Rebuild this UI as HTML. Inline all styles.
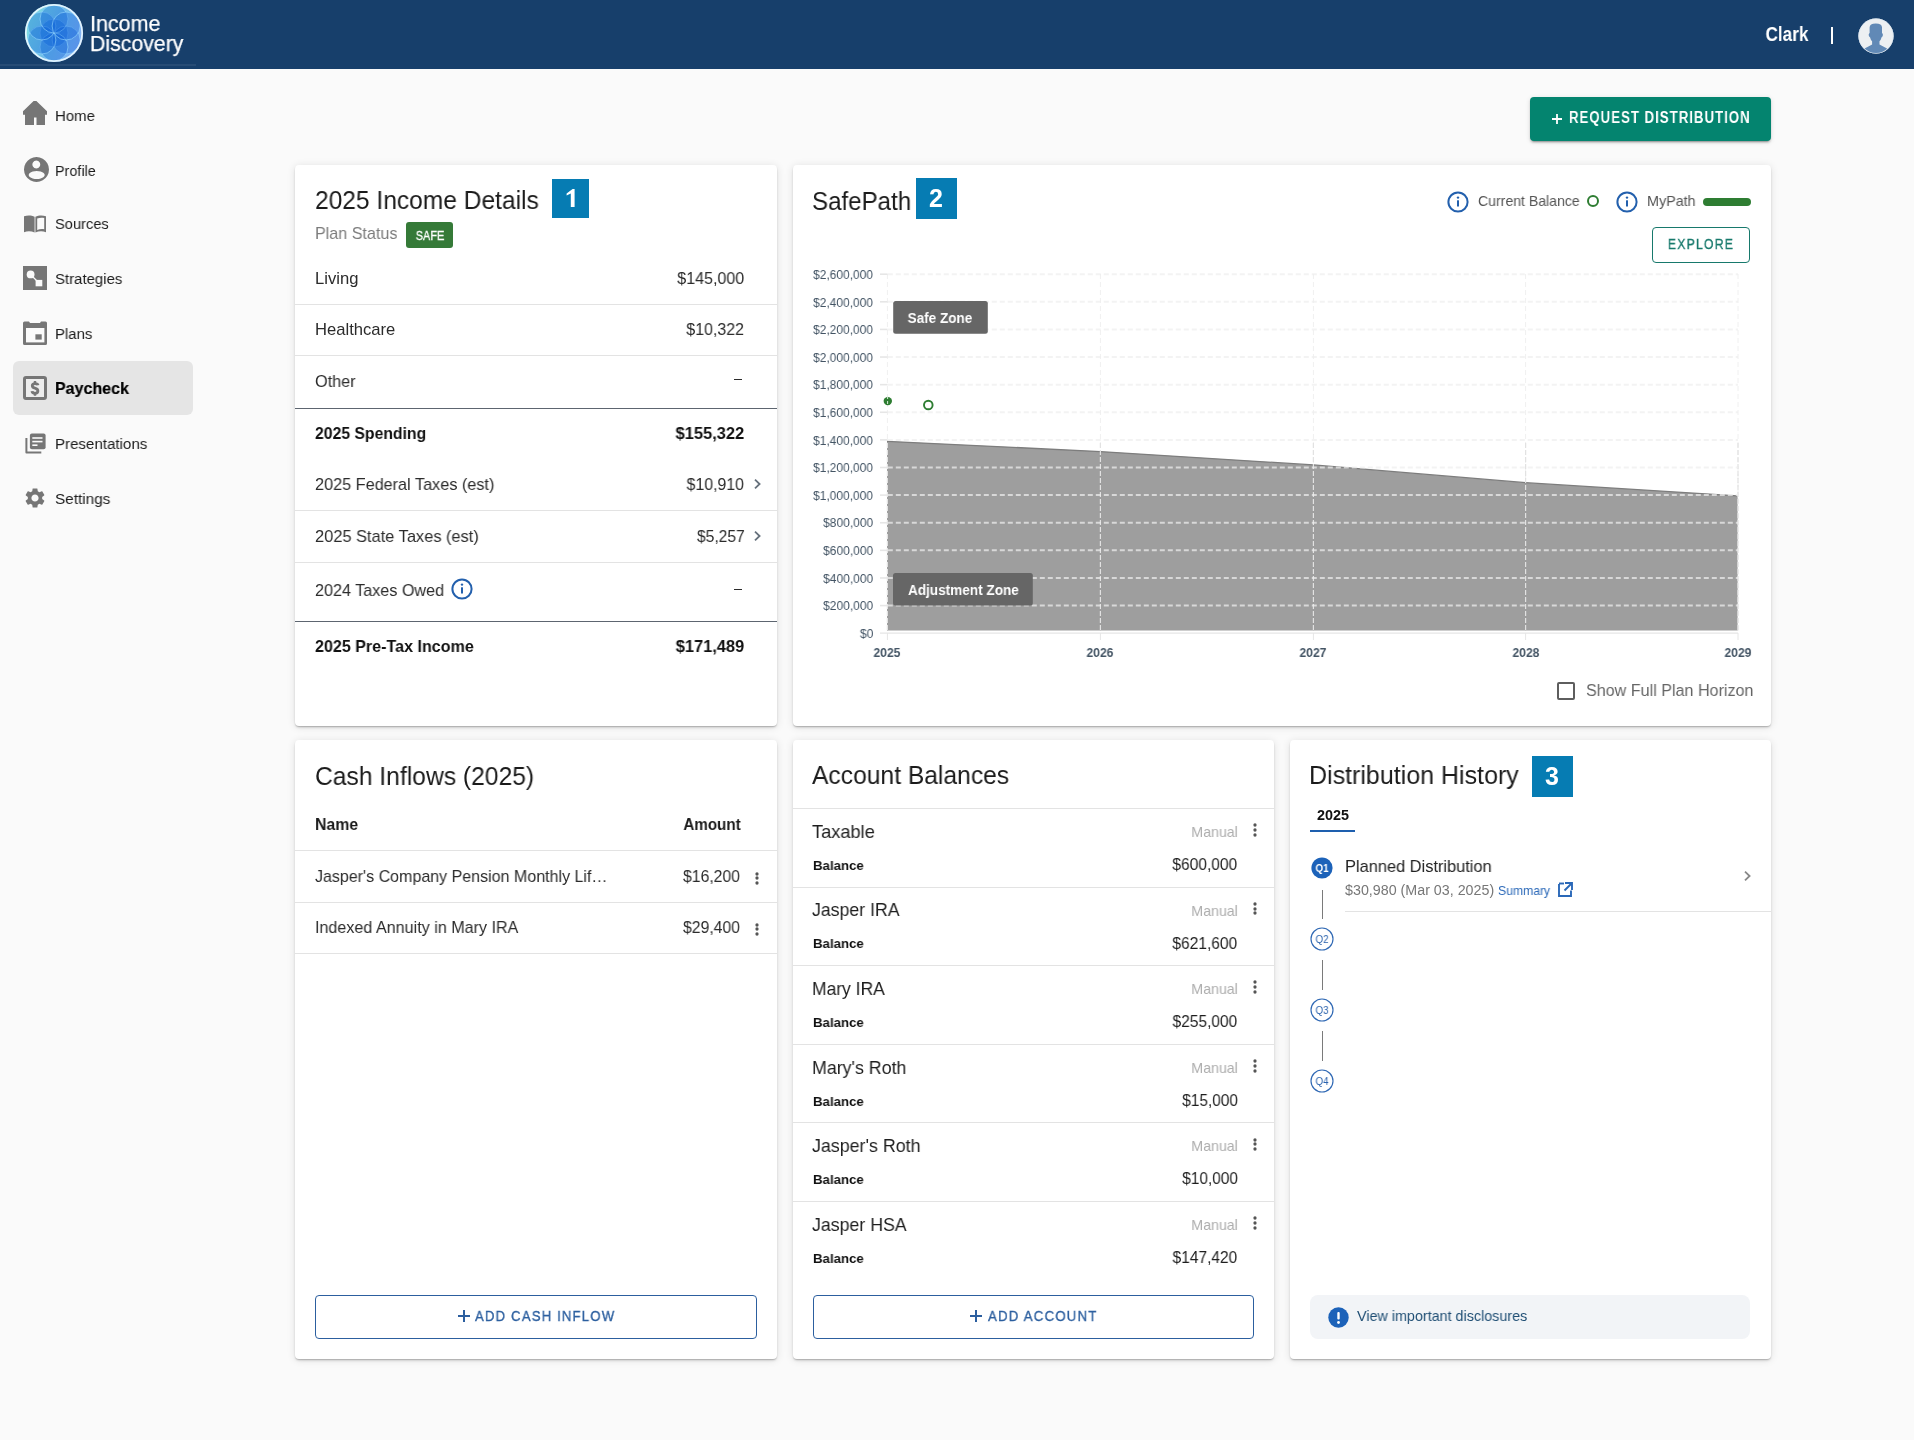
<!DOCTYPE html>
<html><head><meta charset="utf-8"><title>Income Discovery - Paycheck</title>
<style>
html,body{margin:0;padding:0;}
body{width:1914px;height:1440px;overflow:hidden;background:#fafafa;position:relative;font-family:"Liberation Sans",sans-serif;}
div[id]{will-change:transform;}
</style></head><body>
<div style="position:absolute;left:0.00px;top:0.00px;width:1914.00px;height:69.00px;background:#173f6b;"></div>
<div style="position:absolute;left:0.00px;top:64.00px;width:196.00px;height:2.00px;background:rgba(255,255,255,0.07);"></div>
<svg style="position:absolute;left:24.10px;top:3.00px;" width="60" height="60" viewBox="0 0 60 60">
<defs>
<linearGradient id="lg" x1="0" y1="0.3" x2="1" y2="0.7">
<stop offset="0%" stop-color="#7fe0e0"/>
<stop offset="50%" stop-color="#6fbde8"/>
<stop offset="100%" stop-color="#86aef4"/>
</linearGradient>
<clipPath id="lc"><circle cx="30" cy="30" r="28.5"/></clipPath>
</defs>
<circle cx="30" cy="30" r="29" fill="url(#lg)"/>
<g clip-path="url(#lc)" fill="rgba(5,90,215,0.33)" stroke="rgba(150,215,255,0.8)" stroke-width="0.8">
<circle cx="30" cy="30" r="14"/><circle cx="42.12" cy="37.00" r="14"/><circle cx="30.00" cy="44.00" r="14"/><circle cx="17.88" cy="37.00" r="14"/><circle cx="17.88" cy="23.00" r="14"/><circle cx="30.00" cy="16.00" r="14"/><circle cx="42.12" cy="23.00" r="14"/>
</g>
<circle cx="30" cy="30" r="28.2" fill="none" stroke="rgba(235,248,255,0.9)" stroke-width="1.8"/>
</svg>
<div id="t5d77f09a1" style="position:absolute;top:13.01px;font-size:22.20px;line-height:22.20px;font-weight:400;color:#ffffff;white-space:nowrap;font-family:'Liberation Sans', sans-serif;left:90.00px;transform-origin:0 50%;transform:scaleX(0.9673);-webkit-text-stroke:0.25px #ffffff;">Income</div>
<div id="t301c5ce01" style="position:absolute;top:32.80px;font-size:22.20px;line-height:22.20px;font-weight:400;color:#ffffff;white-space:nowrap;font-family:'Liberation Sans', sans-serif;left:90.00px;transform-origin:0 50%;transform:scaleX(0.9587);-webkit-text-stroke:0.25px #ffffff;">Discovery</div>
<div id="t5fa49b6c1" style="position:absolute;top:24.10px;font-size:20.60px;line-height:20.60px;font-weight:700;color:#ffffff;white-space:nowrap;font-family:'Liberation Sans', sans-serif;right:105.30px;transform-origin:100% 50%;transform:scaleX(0.8347);">Clark</div>
<div style="position:absolute;left:1831.00px;top:27.00px;width:2.00px;height:16.50px;background:#ffffff;"></div>
<svg style="position:absolute;left:1857.50px;top:18.30px;" width="36" height="36" viewBox="0 0 36 36">
<circle cx="18" cy="18" r="17.6" fill="#edf0f2"/>
<circle cx="18" cy="18" r="17.2" fill="none" stroke="#dbe6f0" stroke-width="0.8"/>
<clipPath id="avc"><circle cx="18" cy="18" r="17"/></clipPath>
<g clip-path="url(#avc)" fill="#6189b6">
<path d="M11.6 9.5 Q11.6 5.6 17.8 5.6 Q24 5.6 24 9.5 L24 15 Q25.2 15.6 24.8 17.6 Q24.4 19.2 23.6 19.2 Q22.9 22 21.5 23.2 L21.5 26.4 Q24.5 28.2 28.6 30.2 L34 37 L2 37 L7 30.2 Q11.2 28.2 14.1 26.4 L14.1 23.2 Q12.7 22 12 19.2 Q11.2 19.2 10.8 17.6 Q10.4 15.6 11.6 15 Z"/>
</g>
</svg>
<div style="position:absolute;left:13.00px;top:361.00px;width:180.00px;height:54.00px;background:#e5e5e5;border-radius:6px;"></div>
<svg style="position:absolute;left:23.00px;top:101.00px;" width="24" height="24" viewBox="0 0 24 24"><path fill="#767676" d="M10.6 0 L13.4 0 L24 10.2 L24 13.8 L22 13.8 L22 24 L13.5 24 L13.5 16.6 L11 16.6 L11 24 L2 24 L2 13.8 L0 13.8 L0 10.2 Z"/></svg>
<div id="tc4697dac1" style="position:absolute;top:107.81px;font-size:15.50px;line-height:15.50px;font-weight:400;color:#1c1c1c;white-space:nowrap;font-family:'Liberation Sans', sans-serif;left:55.10px;transform-origin:0 50%;transform:scaleX(0.9651);">Home</div>
<svg style="position:absolute;left:23.50px;top:157.30px;" width="25" height="25" viewBox="0 0 25 25"><path fill="#767676" fill-rule="evenodd" d="M12.5 0 A12.5 12.5 0 1 1 12.49 0 Z M12.3 3.6 A3.9 3.9 0 1 0 12.31 3.6 Z M12.7 13.9 A8 4.1 0 1 0 12.71 13.9 Z"/></svg>
<div id="tb227947b1" style="position:absolute;top:162.91px;font-size:15.50px;line-height:15.50px;font-weight:400;color:#1c1c1c;white-space:nowrap;font-family:'Liberation Sans', sans-serif;left:55.10px;transform-origin:0 50%;transform:scaleX(0.9290);">Profile</div>
<svg style="position:absolute;left:24.00px;top:215.00px;" width="22" height="18" viewBox="0 0 22 18"><path fill="#767676" d="M0 1.3 C3.5 0 7.5 0.2 10.6 1.8 L10.6 17.5 C7.2 16 3.6 15.9 0 17.2 Z M11.4 1.8 C14.5 0.2 18.5 0 22 1.3 L22 17.2 C18.4 15.9 14.8 16 11.4 17.5 Z M13.2 3.4 L13.2 15 C15.4 14.1 17.8 13.9 20.2 14.3 L20.2 2.9 C17.8 2.4 15.4 2.6 13.2 3.4 Z" fill-rule="evenodd"/></svg>
<div id="t654b8db11" style="position:absolute;top:215.81px;font-size:15.50px;line-height:15.50px;font-weight:400;color:#1c1c1c;white-space:nowrap;font-family:'Liberation Sans', sans-serif;left:55.10px;transform-origin:0 50%;transform:scaleX(0.9462);">Sources</div>
<svg style="position:absolute;left:23.00px;top:266.00px;" width="24" height="24" viewBox="0 0 24 24"><rect width="24" height="24" fill="#767676"/><circle cx="7.6" cy="8.4" r="3.9" fill="#fafafa"/><path d="M9 10 L14 15" stroke="#fafafa" stroke-width="1.2"/><rect x="12.6" y="13.9" width="6.7" height="6.4" fill="#fafafa"/></svg>
<div id="tc17f81271" style="position:absolute;top:270.70px;font-size:15.50px;line-height:15.50px;font-weight:400;color:#1c1c1c;white-space:nowrap;font-family:'Liberation Sans', sans-serif;left:55.10px;transform-origin:0 50%;transform:scaleX(0.9645);">Strategies</div>
<svg style="position:absolute;left:23.00px;top:321.00px;" width="24" height="24" viewBox="0 0 24 24"><path fill="#767676" d="M1.5 0.5 L6 0.5 L7 2 L17 2 L18 0.5 L22.5 0.5 Q24 0.5 24 2 L24 22.5 Q24 24 22.5 24 L1.5 24 Q0 24 0 22.5 L0 2 Q0 0.5 1.5 0.5 Z"/><rect x="3" y="7" width="18.4" height="14.4" fill="#fafafa"/><rect x="12.4" y="13.3" width="6.3" height="5.3" fill="#767676"/></svg>
<div id="t491749941" style="position:absolute;top:326.00px;font-size:15.50px;line-height:15.50px;font-weight:400;color:#1c1c1c;white-space:nowrap;font-family:'Liberation Sans', sans-serif;left:55.10px;transform-origin:0 50%;transform:scaleX(0.9623);">Plans</div>
<svg style="position:absolute;left:23.00px;top:376.00px;" width="24" height="24" viewBox="0 0 24 24"><rect x="1.5" y="1.5" width="21" height="21" rx="1.5" fill="#ededed" stroke="#767676" stroke-width="3"/><path d="M15 9.3 Q14.7 7.6 12 7.6 Q9.3 7.6 9.3 9.7 Q9.3 11.5 12 12.1 Q14.9 12.8 14.9 15.1 Q14.9 17.3 12 17.3 Q9.2 17.3 9 15.2" fill="none" stroke="#767676" stroke-width="2.8"/><path d="M12 5 L12 7.8 M12 17 L12 19.8" stroke="#767676" stroke-width="2.4"/></svg>
<div id="tee25d30b1" style="position:absolute;top:379.91px;font-size:17.00px;line-height:17.00px;font-weight:700;color:#000000;white-space:nowrap;font-family:'Liberation Sans', sans-serif;left:54.94px;transform-origin:0 50%;transform:scaleX(0.9425);-webkit-text-stroke:0.2px #000;">Paycheck</div>
<svg style="position:absolute;left:24.50px;top:432.50px;" width="21" height="21" viewBox="0 0 21 21"><rect x="4.9" y="0.4" width="15.7" height="15.9" rx="2" fill="#767676"/><rect x="7.3" y="4.2" width="10.2" height="1.6" fill="#fafafa"/><rect x="7.3" y="7.8" width="10.2" height="1.6" fill="#fafafa"/><rect x="7.3" y="11.4" width="5.2" height="1.6" fill="#fafafa"/><path d="M0.4 4.9 L2.4 4.9 L2.4 18.5 L16.3 18.5 L16.3 20.4 L1.4 20.4 Q0.4 20.4 0.4 19.4 Z" fill="#767676"/></svg>
<div id="t3b62e9561" style="position:absolute;top:436.00px;font-size:15.50px;line-height:15.50px;font-weight:400;color:#1c1c1c;white-space:nowrap;font-family:'Liberation Sans', sans-serif;left:55.10px;transform-origin:0 50%;transform:scaleX(0.9740);">Presentations</div>
<svg style="position:absolute;left:23.00px;top:486.00px;" width="24" height="24" viewBox="0 0 24 24"><path fill="#767676" d="M19.14 12.94c.04-.3.06-.61.06-.94 0-.32-.02-.64-.07-.94l2.03-1.58c.18-.14.23-.41.12-.61l-1.92-3.32c-.12-.22-.37-.29-.59-.22l-2.39.96c-.5-.38-1.03-.7-1.62-.94l-.36-2.54c-.04-.24-.24-.41-.48-.41h-3.84c-.24 0-.43.17-.47.41l-.36 2.54c-.59.24-1.130.57-1.62.94l-2.39-.96c-.22-.08-.47 0-.59.22L2.74 8.87c-.12.21-.08.47.12.61l2.03 1.58c-.05.3-.09.63-.09.94s.02.64.07.94l-2.030 1.58c-.18.14-.23.41-.12.61l1.92 3.32c.12.22.37.29.59.22l2.39-.96c.5.38 1.03.7 1.62.94l.36 2.54c.05.24.24.41.48.41h3.84c.24 0 .44-.17.47-.41l.36-2.54c.59-.24 1.13-.56 1.62-.94l2.39.96c.22.08.47 0 .59-.22l1.92-3.32c.12-.22.07-.47-.12-.61l-2.01-1.58zM12 15.6c-1.98 0-3.600-1.62-3.6-3.6s1.62-3.6 3.6-3.6 3.6 1.62 3.6 3.6-1.62 3.6-3.6 3.6z"/></svg>
<div id="t4d02d0b91" style="position:absolute;top:490.91px;font-size:15.50px;line-height:15.50px;font-weight:400;color:#1c1c1c;white-space:nowrap;font-family:'Liberation Sans', sans-serif;left:55.10px;transform-origin:0 50%;transform:scaleX(0.9875);">Settings</div>
<div style="position:absolute;left:1530.00px;top:97.00px;width:241.00px;height:43.50px;background:#04846f;border-radius:4px;box-shadow:0 3px 1px -2px rgba(0,0,0,.2),0 2px 2px 0 rgba(0,0,0,.14),0 1px 5px 0 rgba(0,0,0,.12);"></div>
<svg style="position:absolute;left:1552.00px;top:114.20px;" width="10" height="10" viewBox="0 0 10 10"><path d="M5 0 L5 10 M0 5 L10 5" stroke="#ffffff" stroke-width="1.8"/></svg>
<div id="ta82499e11" style="position:absolute;top:110.21px;font-size:15.80px;line-height:15.80px;font-weight:700;color:#ffffff;white-space:nowrap;font-family:'Liberation Sans', sans-serif;letter-spacing:1.20px;left:1568.99px;transform-origin:0 50%;transform:scaleX(0.8367);">REQUEST DISTRIBUTION</div>
<div style="position:absolute;left:295.00px;top:165.00px;width:482.00px;height:560.50px;background:#ffffff;border-radius:4px;box-shadow:0px 2px 3px -1px rgba(0,0,0,0.22),0px 1px 1px 0px rgba(0,0,0,0.12),0px 1px 8px 0px rgba(0,0,0,0.11);"></div>
<div style="position:absolute;left:793.00px;top:165.00px;width:978.00px;height:560.50px;background:#ffffff;border-radius:4px;box-shadow:0px 2px 3px -1px rgba(0,0,0,0.22),0px 1px 1px 0px rgba(0,0,0,0.12),0px 1px 8px 0px rgba(0,0,0,0.11);"></div>
<div style="position:absolute;left:295.00px;top:740.00px;width:482.00px;height:618.50px;background:#ffffff;border-radius:4px;box-shadow:0px 2px 3px -1px rgba(0,0,0,0.22),0px 1px 1px 0px rgba(0,0,0,0.12),0px 1px 8px 0px rgba(0,0,0,0.11);"></div>
<div style="position:absolute;left:793.00px;top:740.00px;width:481.00px;height:618.50px;background:#ffffff;border-radius:4px;box-shadow:0px 2px 3px -1px rgba(0,0,0,0.22),0px 1px 1px 0px rgba(0,0,0,0.12),0px 1px 8px 0px rgba(0,0,0,0.11);"></div>
<div style="position:absolute;left:1290.00px;top:740.00px;width:481.00px;height:618.50px;background:#ffffff;border-radius:4px;box-shadow:0px 2px 3px -1px rgba(0,0,0,0.22),0px 1px 1px 0px rgba(0,0,0,0.12),0px 1px 8px 0px rgba(0,0,0,0.11);"></div>
<div id="t537833f41" style="position:absolute;top:188.31px;font-size:25.50px;line-height:25.50px;font-weight:400;color:#1b1b1b;white-space:nowrap;font-family:'Liberation Sans', sans-serif;left:314.85px;transform-origin:0 50%;transform:scaleX(0.9626);">2025 Income Details</div>
<div style="position:absolute;left:552.00px;top:179.00px;width:37.00px;height:38.80px;background:#067cb3;"></div>
<svg style="position:absolute;left:552.00px;top:179.00px;" width="37" height="39" viewBox="0 0 37 39"><path d="M14.6 14.4 L20.6 10 L22.6 10 L22.6 28 L18.8 28 L18.8 14.6 L14.6 16.6 Z" fill="#ffffff"/></svg>
<div id="t6a7b72811" style="position:absolute;top:225.41px;font-size:17.00px;line-height:17.00px;font-weight:400;color:#7b7b7b;white-space:nowrap;font-family:'Liberation Sans', sans-serif;left:315.24px;transform-origin:0 50%;transform:scaleX(0.9482);">Plan Status</div>
<div style="position:absolute;left:406.00px;top:222.00px;width:47.00px;height:26.00px;background:#357a38;border-radius:3px;"></div>
<div id="tc135e4911" style="position:absolute;top:228.81px;font-size:13.60px;line-height:13.60px;font-weight:400;color:#ffffff;white-space:nowrap;font-family:'Liberation Sans', sans-serif;left:429.50px;transform-origin:0 50%;transform:translateX(-50%) scaleX(0.8025);transform-origin:50% 50%;-webkit-text-stroke:0.35px #ffffff;">SAFE</div>
<div id="t361684ad1" style="position:absolute;top:271.21px;font-size:16.60px;line-height:16.60px;font-weight:400;color:#2b2b2b;white-space:nowrap;font-family:'Liberation Sans', sans-serif;left:315.25px;transform-origin:0 50%;transform:scaleX(1.0012);">Living</div>
<div id="t79e9b75e1" style="position:absolute;top:271.21px;font-size:16.60px;line-height:16.60px;font-weight:400;color:#2b2b2b;white-space:nowrap;font-family:'Liberation Sans', sans-serif;right:1169.70px;transform-origin:100% 50%;transform:scaleX(0.9679);">$145,000</div>
<div style="position:absolute;left:295.00px;top:304.00px;width:482.00px;height:1.00px;background:#e3e3e3;"></div>
<div id="t524ccb641" style="position:absolute;top:322.11px;font-size:16.60px;line-height:16.60px;font-weight:400;color:#2b2b2b;white-space:nowrap;font-family:'Liberation Sans', sans-serif;left:315.25px;transform-origin:0 50%;transform:scaleX(0.9958);">Healthcare</div>
<div id="t698ab7401" style="position:absolute;top:322.11px;font-size:16.60px;line-height:16.60px;font-weight:400;color:#2b2b2b;white-space:nowrap;font-family:'Liberation Sans', sans-serif;right:1169.70px;transform-origin:100% 50%;transform:scaleX(0.9619);">$10,322</div>
<div style="position:absolute;left:295.00px;top:355.00px;width:482.00px;height:1.00px;background:#e3e3e3;"></div>
<div id="t8096a8251" style="position:absolute;top:373.71px;font-size:16.60px;line-height:16.60px;font-weight:400;color:#2b2b2b;white-space:nowrap;font-family:'Liberation Sans', sans-serif;left:315.25px;transform-origin:0 50%;transform:scaleX(0.9782);">Other</div>
<div style="position:absolute;left:733.50px;top:379.00px;width:8.50px;height:1.30px;background:#2b2b2b;"></div>
<div style="position:absolute;left:295.00px;top:408.00px;width:482.00px;height:1.30px;background:#5d6570;"></div>
<div id="ta078a6661" style="position:absolute;top:426.00px;font-size:16.60px;line-height:16.60px;font-weight:700;color:#111111;white-space:nowrap;font-family:'Liberation Sans', sans-serif;left:315.25px;transform-origin:0 50%;transform:scaleX(0.9495);">2025 Spending</div>
<div id="t40611aa91" style="position:absolute;top:426.00px;font-size:16.60px;line-height:16.60px;font-weight:700;color:#111111;white-space:nowrap;font-family:'Liberation Sans', sans-serif;right:1169.70px;transform-origin:100% 50%;transform:scaleX(0.9925);">$155,322</div>
<div id="tbfbdc6e31" style="position:absolute;top:476.61px;font-size:16.60px;line-height:16.60px;font-weight:400;color:#2b2b2b;white-space:nowrap;font-family:'Liberation Sans', sans-serif;left:315.25px;transform-origin:0 50%;transform:scaleX(0.9791);">2025 Federal Taxes (est)</div>
<div id="tcd5840311" style="position:absolute;top:476.61px;font-size:16.60px;line-height:16.60px;font-weight:400;color:#2b2b2b;white-space:nowrap;font-family:'Liberation Sans', sans-serif;right:1169.70px;transform-origin:100% 50%;transform:scaleX(0.9569);">$10,910</div>
<svg style="position:absolute;left:751.20px;top:478.00px;" width="12" height="12" viewBox="0 0 12 12"><path d="M4 1.6 L8.6 6 L4 10.4" fill="none" stroke="#66717c" stroke-width="1.8"/></svg>
<div style="position:absolute;left:295.00px;top:510.00px;width:482.00px;height:1.00px;background:#e3e3e3;"></div>
<div id="tf95ac6701" style="position:absolute;top:528.81px;font-size:16.60px;line-height:16.60px;font-weight:400;color:#2b2b2b;white-space:nowrap;font-family:'Liberation Sans', sans-serif;left:315.25px;transform-origin:0 50%;transform:scaleX(0.9884);">2025 State Taxes (est)</div>
<div id="tb1c58cf41" style="position:absolute;top:528.81px;font-size:16.60px;line-height:16.60px;font-weight:400;color:#2b2b2b;white-space:nowrap;font-family:'Liberation Sans', sans-serif;right:1169.70px;transform-origin:100% 50%;transform:scaleX(0.9416);">$5,257</div>
<svg style="position:absolute;left:751.20px;top:530.00px;" width="12" height="12" viewBox="0 0 12 12"><path d="M4 1.6 L8.6 6 L4 10.4" fill="none" stroke="#66717c" stroke-width="1.8"/></svg>
<div style="position:absolute;left:295.00px;top:562.00px;width:482.00px;height:1.00px;background:#e3e3e3;"></div>
<div id="t9b44e9621" style="position:absolute;top:582.61px;font-size:16.60px;line-height:16.60px;font-weight:400;color:#2b2b2b;white-space:nowrap;font-family:'Liberation Sans', sans-serif;left:315.25px;transform-origin:0 50%;transform:scaleX(0.9742);">2024 Taxes Owed</div>
<svg style="position:absolute;left:450.00px;top:577.00px;" width="24" height="24" viewBox="0 0 24 24"><circle cx="12" cy="12" r="9.60" fill="none" stroke="#2360ad" stroke-width="2"/><rect x="11" y="10.3" width="2" height="6.2" fill="#2360ad"/><circle cx="12" cy="7.6" r="1.2" fill="#2360ad"/></svg>
<div style="position:absolute;left:733.50px;top:589.00px;width:8.50px;height:1.30px;background:#2b2b2b;"></div>
<div style="position:absolute;left:295.00px;top:621.00px;width:482.00px;height:1.30px;background:#5d6570;"></div>
<div id="tb3a977221" style="position:absolute;top:638.50px;font-size:16.60px;line-height:16.60px;font-weight:700;color:#111111;white-space:nowrap;font-family:'Liberation Sans', sans-serif;left:315.25px;transform-origin:0 50%;transform:scaleX(0.9685);">2025 Pre-Tax Income</div>
<div id="tf877e6271" style="position:absolute;top:638.50px;font-size:16.60px;line-height:16.60px;font-weight:700;color:#111111;white-space:nowrap;font-family:'Liberation Sans', sans-serif;right:1169.70px;transform-origin:100% 50%;transform:scaleX(0.9896);">$171,489</div>
<div id="t3a17fe6e1" style="position:absolute;top:188.71px;font-size:25.00px;line-height:25.00px;font-weight:400;color:#1b1b1b;white-space:nowrap;font-family:'Liberation Sans', sans-serif;left:812.48px;transform-origin:0 50%;transform:scaleX(0.9637);">SafePath</div>
<div style="position:absolute;left:916.20px;top:178.20px;width:40.50px;height:40.50px;background:#067cb3;"></div>
<div id="t2df3f6e91" style="position:absolute;top:186.05px;font-size:25.00px;line-height:25.00px;font-weight:700;color:#ffffff;white-space:nowrap;font-family:'Liberation Sans', sans-serif;left:936.45px;transform-origin:0 50%;transform:translateX(-50%) scaleX(1.0000);transform-origin:50% 50%;">2</div>
<svg style="position:absolute;left:1446.00px;top:190.00px;" width="24" height="24" viewBox="0 0 24 24"><circle cx="12" cy="12" r="9.60" fill="none" stroke="#2360ad" stroke-width="2"/><rect x="11" y="10.3" width="2" height="6.2" fill="#2360ad"/><circle cx="12" cy="7.6" r="1.2" fill="#2360ad"/></svg>
<div id="t91fd11831" style="position:absolute;top:193.91px;font-size:14.60px;line-height:14.60px;font-weight:400;color:#555555;white-space:nowrap;font-family:'Liberation Sans', sans-serif;left:1477.84px;transform-origin:0 50%;transform:scaleX(0.9647);">Current Balance</div>
<svg style="position:absolute;left:1586.00px;top:194.00px;" width="14" height="14" viewBox="0 0 14 14"><circle cx="7" cy="7" r="5" fill="none" stroke="#2e7d32" stroke-width="2"/></svg>
<svg style="position:absolute;left:1615.00px;top:190.00px;" width="24" height="24" viewBox="0 0 24 24"><circle cx="12" cy="12" r="9.60" fill="none" stroke="#2360ad" stroke-width="2"/><rect x="11" y="10.3" width="2" height="6.2" fill="#2360ad"/><circle cx="12" cy="7.6" r="1.2" fill="#2360ad"/></svg>
<div id="tcc6b245d1" style="position:absolute;top:193.91px;font-size:14.60px;line-height:14.60px;font-weight:400;color:#555555;white-space:nowrap;font-family:'Liberation Sans', sans-serif;left:1647.14px;transform-origin:0 50%;transform:scaleX(0.9830);">MyPath</div>
<div style="position:absolute;left:1703.00px;top:198.00px;width:48.00px;height:8.00px;background:#2e7d32;border-radius:4px;"></div>
<div style="position:absolute;left:1652.20px;top:227.20px;width:97.60px;height:35.60px;background:transparent;border:1.3px solid #17796c;border-radius:4px;box-sizing:border-box;"></div>
<div id="ta30012cb1" style="position:absolute;top:237.11px;font-size:14.60px;line-height:14.60px;font-weight:400;color:#17796c;white-space:nowrap;font-family:'Liberation Sans', sans-serif;letter-spacing:1.50px;left:1701.00px;transform-origin:0 50%;transform:translateX(-50%) scaleX(0.8345);transform-origin:50% 50%;-webkit-text-stroke:0.35px #17796c;">EXPLORE</div>
<svg style="position:absolute;left:800.00px;top:255.00px;" width="960" height="420" viewBox="0 0 960 420"><line x1="87.40" y1="19.00" x2="87.40" y2="378.00" stroke="#f0f0f0" stroke-width="1" stroke-dasharray="5,3"/><line x1="300.40" y1="19.00" x2="300.40" y2="378.00" stroke="#f0f0f0" stroke-width="1" stroke-dasharray="5,3"/><line x1="513.40" y1="19.00" x2="513.40" y2="378.00" stroke="#f0f0f0" stroke-width="1" stroke-dasharray="5,3"/><line x1="725.60" y1="19.00" x2="725.60" y2="378.00" stroke="#f0f0f0" stroke-width="1" stroke-dasharray="5,3"/><line x1="938.00" y1="19.00" x2="938.00" y2="378.00" stroke="#f0f0f0" stroke-width="1" stroke-dasharray="5,3"/><polygon points="87.00,186.30 300.50,196.60 513.40,209.90 725.60,227.70 937.60,240.80 937.60,375.60 87.00,375.60" fill="#9e9e9e"/><polyline points="87.00,186.30 300.50,196.60 513.40,209.90 725.60,227.70 937.60,240.80" fill="none" stroke="#7d7d7d" stroke-width="1.3"/><line x1="87.40" y1="188.00" x2="87.40" y2="376.00" stroke="#e2e2e2" stroke-width="1.2" stroke-dasharray="5,2"/><line x1="300.40" y1="188.00" x2="300.40" y2="376.00" stroke="#e2e2e2" stroke-width="1.2" stroke-dasharray="5,2"/><line x1="513.40" y1="188.00" x2="513.40" y2="376.00" stroke="#e2e2e2" stroke-width="1.2" stroke-dasharray="5,2"/><line x1="725.60" y1="188.00" x2="725.60" y2="376.00" stroke="#e2e2e2" stroke-width="1.2" stroke-dasharray="5,2"/><line x1="938.00" y1="188.00" x2="938.00" y2="376.00" stroke="#e2e2e2" stroke-width="1.2" stroke-dasharray="5,2"/><line x1="80.00" y1="19.20" x2="87.50" y2="19.20" stroke="#e6e6e6" stroke-width="1.6"/><line x1="87.80" y1="19.20" x2="938.00" y2="19.20" stroke="rgba(238,238,238,0.72)" stroke-width="2" stroke-dasharray="5,3"/><line x1="80.00" y1="46.81" x2="87.50" y2="46.81" stroke="#e6e6e6" stroke-width="1.6"/><line x1="87.80" y1="46.81" x2="938.00" y2="46.81" stroke="rgba(238,238,238,0.72)" stroke-width="2" stroke-dasharray="5,3"/><line x1="80.00" y1="74.43" x2="87.50" y2="74.43" stroke="#e6e6e6" stroke-width="1.6"/><line x1="87.80" y1="74.43" x2="938.00" y2="74.43" stroke="rgba(238,238,238,0.72)" stroke-width="2" stroke-dasharray="5,3"/><line x1="80.00" y1="102.04" x2="87.50" y2="102.04" stroke="#e6e6e6" stroke-width="1.6"/><line x1="87.80" y1="102.04" x2="938.00" y2="102.04" stroke="rgba(238,238,238,0.72)" stroke-width="2" stroke-dasharray="5,3"/><line x1="80.00" y1="129.66" x2="87.50" y2="129.66" stroke="#e6e6e6" stroke-width="1.6"/><line x1="87.80" y1="129.66" x2="938.00" y2="129.66" stroke="rgba(238,238,238,0.72)" stroke-width="2" stroke-dasharray="5,3"/><line x1="80.00" y1="157.27" x2="87.50" y2="157.27" stroke="#e6e6e6" stroke-width="1.6"/><line x1="87.80" y1="157.27" x2="938.00" y2="157.27" stroke="rgba(238,238,238,0.72)" stroke-width="2" stroke-dasharray="5,3"/><line x1="80.00" y1="184.89" x2="87.50" y2="184.89" stroke="#e6e6e6" stroke-width="1.6"/><line x1="87.80" y1="184.89" x2="938.00" y2="184.89" stroke="rgba(238,238,238,0.72)" stroke-width="2" stroke-dasharray="5,3"/><line x1="80.00" y1="212.50" x2="87.50" y2="212.50" stroke="#e6e6e6" stroke-width="1.6"/><line x1="87.80" y1="212.50" x2="938.00" y2="212.50" stroke="rgba(238,238,238,0.72)" stroke-width="2" stroke-dasharray="5,3"/><line x1="80.00" y1="240.12" x2="87.50" y2="240.12" stroke="#e6e6e6" stroke-width="1.6"/><line x1="87.80" y1="240.12" x2="938.00" y2="240.12" stroke="rgba(238,238,238,0.72)" stroke-width="2" stroke-dasharray="5,3"/><line x1="80.00" y1="267.74" x2="87.50" y2="267.74" stroke="#e6e6e6" stroke-width="1.6"/><line x1="87.80" y1="267.74" x2="938.00" y2="267.74" stroke="rgba(238,238,238,0.72)" stroke-width="2" stroke-dasharray="5,3"/><line x1="80.00" y1="295.35" x2="87.50" y2="295.35" stroke="#e6e6e6" stroke-width="1.6"/><line x1="87.80" y1="295.35" x2="938.00" y2="295.35" stroke="rgba(238,238,238,0.72)" stroke-width="2" stroke-dasharray="5,3"/><line x1="80.00" y1="322.96" x2="87.50" y2="322.96" stroke="#e6e6e6" stroke-width="1.6"/><line x1="87.80" y1="322.96" x2="938.00" y2="322.96" stroke="rgba(238,238,238,0.72)" stroke-width="2" stroke-dasharray="5,3"/><line x1="80.00" y1="350.58" x2="87.50" y2="350.58" stroke="#e6e6e6" stroke-width="1.6"/><line x1="87.80" y1="350.58" x2="938.00" y2="350.58" stroke="rgba(238,238,238,0.72)" stroke-width="2" stroke-dasharray="5,3"/><line x1="80.00" y1="378.19" x2="938.00" y2="378.19" stroke="#e6e6e6" stroke-width="1.3"/><line x1="87.40" y1="378.00" x2="87.40" y2="385.00" stroke="#e6e6e6" stroke-width="1"/><line x1="300.40" y1="378.00" x2="300.40" y2="385.00" stroke="#e6e6e6" stroke-width="1"/><line x1="513.40" y1="378.00" x2="513.40" y2="385.00" stroke="#e6e6e6" stroke-width="1"/><line x1="725.60" y1="378.00" x2="725.60" y2="385.00" stroke="#e6e6e6" stroke-width="1"/><line x1="938.00" y1="378.00" x2="938.00" y2="385.00" stroke="#e6e6e6" stroke-width="1"/><rect x="93.20" y="46.00" width="94.6" height="32.7" rx="2.5" fill="#666666"/><rect x="93.00" y="318.10" width="139.8" height="32.5" rx="2.5" fill="#666666"/><circle cx="87.80" cy="146.10" r="4.2" fill="#2e7d32"/><line x1="87.60" y1="141.00" x2="87.60" y2="151.00" stroke="#d9ead9" stroke-width="1" stroke-dasharray="3,2"/><circle cx="128.30" cy="150.00" r="4.3" fill="none" stroke="#2e7d32" stroke-width="1.9"/></svg>
<div id="t079c8bfc1" style="position:absolute;top:311.30px;font-size:14.50px;line-height:14.50px;font-weight:700;color:#ffffff;white-space:nowrap;font-family:'Liberation Sans', sans-serif;right:941.70px;transform-origin:100% 50%;transform:scaleX(0.9337);">Safe Zone</div>
<div id="t8589b0d91" style="position:absolute;top:583.21px;font-size:14.50px;line-height:14.50px;font-weight:700;color:#ffffff;white-space:nowrap;font-family:'Liberation Sans', sans-serif;left:907.75px;transform-origin:0 50%;transform:scaleX(0.9359);">Adjustment Zone</div>
<div id="tfe0a2d321" style="position:absolute;top:267.91px;font-size:13.00px;line-height:13.00px;font-weight:400;color:#435464;white-space:nowrap;font-family:'Liberation Sans', sans-serif;right:1040.70px;transform-origin:100% 50%;transform:scaleX(0.9220);">$2,600,000</div>
<div id="t53c479a61" style="position:absolute;top:295.52px;font-size:13.00px;line-height:13.00px;font-weight:400;color:#435464;white-space:nowrap;font-family:'Liberation Sans', sans-serif;right:1040.70px;transform-origin:100% 50%;transform:scaleX(0.9220);">$2,400,000</div>
<div id="tce7162bd1" style="position:absolute;top:323.14px;font-size:13.00px;line-height:13.00px;font-weight:400;color:#435464;white-space:nowrap;font-family:'Liberation Sans', sans-serif;right:1040.70px;transform-origin:100% 50%;transform:scaleX(0.9220);">$2,200,000</div>
<div id="td9a9e2511" style="position:absolute;top:350.75px;font-size:13.00px;line-height:13.00px;font-weight:400;color:#435464;white-space:nowrap;font-family:'Liberation Sans', sans-serif;right:1040.70px;transform-origin:100% 50%;transform:scaleX(0.9220);">$2,000,000</div>
<div id="t1bbbdc7d1" style="position:absolute;top:378.37px;font-size:13.00px;line-height:13.00px;font-weight:400;color:#435464;white-space:nowrap;font-family:'Liberation Sans', sans-serif;right:1040.70px;transform-origin:100% 50%;transform:scaleX(0.9220);">$1,800,000</div>
<div id="t069bc7901" style="position:absolute;top:405.98px;font-size:13.00px;line-height:13.00px;font-weight:400;color:#435464;white-space:nowrap;font-family:'Liberation Sans', sans-serif;right:1040.70px;transform-origin:100% 50%;transform:scaleX(0.9220);">$1,600,000</div>
<div id="tb9c5cadd1" style="position:absolute;top:433.59px;font-size:13.00px;line-height:13.00px;font-weight:400;color:#435464;white-space:nowrap;font-family:'Liberation Sans', sans-serif;right:1040.70px;transform-origin:100% 50%;transform:scaleX(0.9220);">$1,400,000</div>
<div id="t0ce180ae1" style="position:absolute;top:461.22px;font-size:13.00px;line-height:13.00px;font-weight:400;color:#435464;white-space:nowrap;font-family:'Liberation Sans', sans-serif;right:1040.70px;transform-origin:100% 50%;transform:scaleX(0.9220);">$1,200,000</div>
<div id="tf12c48eb1" style="position:absolute;top:488.83px;font-size:13.00px;line-height:13.00px;font-weight:400;color:#435464;white-space:nowrap;font-family:'Liberation Sans', sans-serif;right:1040.70px;transform-origin:100% 50%;transform:scaleX(0.9220);">$1,000,000</div>
<div id="t846b67271" style="position:absolute;top:516.44px;font-size:13.00px;line-height:13.00px;font-weight:400;color:#435464;white-space:nowrap;font-family:'Liberation Sans', sans-serif;right:1040.70px;transform-origin:100% 50%;transform:scaleX(0.9256);">$800,000</div>
<div id="ta7de30dc1" style="position:absolute;top:544.06px;font-size:13.00px;line-height:13.00px;font-weight:400;color:#435464;white-space:nowrap;font-family:'Liberation Sans', sans-serif;right:1040.70px;transform-origin:100% 50%;transform:scaleX(0.9256);">$600,000</div>
<div id="tf9ce58d21" style="position:absolute;top:571.67px;font-size:13.00px;line-height:13.00px;font-weight:400;color:#435464;white-space:nowrap;font-family:'Liberation Sans', sans-serif;right:1040.70px;transform-origin:100% 50%;transform:scaleX(0.9256);">$400,000</div>
<div id="td4d0f7ce1" style="position:absolute;top:599.28px;font-size:13.00px;line-height:13.00px;font-weight:400;color:#435464;white-space:nowrap;font-family:'Liberation Sans', sans-serif;right:1040.70px;transform-origin:100% 50%;transform:scaleX(0.9256);">$200,000</div>
<div id="t14e55d661" style="position:absolute;top:626.91px;font-size:13.00px;line-height:13.00px;font-weight:400;color:#435464;white-space:nowrap;font-family:'Liberation Sans', sans-serif;right:1040.70px;transform-origin:100% 50%;transform:scaleX(0.9400);">$0</div>
<div id="td767ea8f1" style="position:absolute;top:646.91px;font-size:12.80px;line-height:12.80px;font-weight:700;color:#435464;white-space:nowrap;font-family:'Liberation Sans', sans-serif;left:887.40px;transform-origin:0 50%;transform:translateX(-50%) scaleX(0.9484);transform-origin:50% 50%;">2025</div>
<div id="t7818edc71" style="position:absolute;top:646.91px;font-size:12.80px;line-height:12.80px;font-weight:700;color:#435464;white-space:nowrap;font-family:'Liberation Sans', sans-serif;left:1100.40px;transform-origin:0 50%;transform:translateX(-50%) scaleX(0.9484);transform-origin:50% 50%;">2026</div>
<div id="te83799d71" style="position:absolute;top:646.91px;font-size:12.80px;line-height:12.80px;font-weight:700;color:#435464;white-space:nowrap;font-family:'Liberation Sans', sans-serif;left:1313.40px;transform-origin:0 50%;transform:translateX(-50%) scaleX(0.9484);transform-origin:50% 50%;">2027</div>
<div id="t69ca931b1" style="position:absolute;top:646.91px;font-size:12.80px;line-height:12.80px;font-weight:700;color:#435464;white-space:nowrap;font-family:'Liberation Sans', sans-serif;left:1525.60px;transform-origin:0 50%;transform:translateX(-50%) scaleX(0.9484);transform-origin:50% 50%;">2028</div>
<div id="t072278191" style="position:absolute;top:646.91px;font-size:12.80px;line-height:12.80px;font-weight:700;color:#435464;white-space:nowrap;font-family:'Liberation Sans', sans-serif;left:1738.00px;transform-origin:0 50%;transform:translateX(-50%) scaleX(0.9484);transform-origin:50% 50%;">2029</div>
<div style="position:absolute;left:1557.20px;top:682.00px;width:17.60px;height:17.60px;background:transparent;border:2px solid #5e5e5e;border-radius:2px;box-sizing:border-box;"></div>
<div id="t2889f57b1" style="position:absolute;top:682.41px;font-size:17.20px;line-height:17.20px;font-weight:400;color:#666666;white-space:nowrap;font-family:'Liberation Sans', sans-serif;left:1586.23px;transform-origin:0 50%;transform:scaleX(0.9374);">Show Full Plan Horizon</div>
<div id="tfe03478c1" style="position:absolute;top:763.61px;font-size:25.30px;line-height:25.30px;font-weight:400;color:#1b1b1b;white-space:nowrap;font-family:'Liberation Sans', sans-serif;left:315.16px;transform-origin:0 50%;transform:scaleX(0.9741);">Cash Inflows (2025)</div>
<div id="t1b2f72a31" style="position:absolute;top:816.91px;font-size:16.60px;line-height:16.60px;font-weight:700;color:#1a1a1a;white-space:nowrap;font-family:'Liberation Sans', sans-serif;left:315.25px;transform-origin:0 50%;transform:scaleX(0.9537);">Name</div>
<div id="t594b318d1" style="position:absolute;top:817.11px;font-size:16.60px;line-height:16.60px;font-weight:700;color:#1a1a1a;white-space:nowrap;font-family:'Liberation Sans', sans-serif;right:1173.50px;transform-origin:100% 50%;transform:scaleX(0.9141);">Amount</div>
<div style="position:absolute;left:295.00px;top:850.00px;width:482.00px;height:1.00px;background:#e3e3e3;"></div>
<div id="td5f6708a1" style="position:absolute;top:869.00px;font-size:16.60px;line-height:16.60px;font-weight:400;color:#2b2b2b;white-space:nowrap;font-family:'Liberation Sans', sans-serif;left:315.25px;transform-origin:0 50%;transform:scaleX(0.9653);">Jasper's Company Pension Monthly Lif…</div>
<div id="t6012cdcf1" style="position:absolute;top:869.00px;font-size:16.60px;line-height:16.60px;font-weight:400;color:#2b2b2b;white-space:nowrap;font-family:'Liberation Sans', sans-serif;right:1174.00px;transform-origin:100% 50%;transform:scaleX(0.9502);">$16,200</div>
<svg style="position:absolute;left:755.00px;top:871.60px;" width="4" height="4" viewBox="0 0 4 4"><circle cx="2" cy="2" r="1.65" fill="#555555"/></svg>
<svg style="position:absolute;left:755.00px;top:876.40px;" width="4" height="4" viewBox="0 0 4 4"><circle cx="2" cy="2" r="1.65" fill="#555555"/></svg>
<svg style="position:absolute;left:755.00px;top:881.20px;" width="4" height="4" viewBox="0 0 4 4"><circle cx="2" cy="2" r="1.65" fill="#555555"/></svg>
<div style="position:absolute;left:295.00px;top:902.00px;width:482.00px;height:1.00px;background:#e3e3e3;"></div>
<div id="t7ad39ffd1" style="position:absolute;top:920.00px;font-size:16.60px;line-height:16.60px;font-weight:400;color:#2b2b2b;white-space:nowrap;font-family:'Liberation Sans', sans-serif;left:315.25px;transform-origin:0 50%;transform:scaleX(0.9715);">Indexed Annuity in Mary IRA</div>
<div id="t03ecfce61" style="position:absolute;top:920.00px;font-size:16.60px;line-height:16.60px;font-weight:400;color:#2b2b2b;white-space:nowrap;font-family:'Liberation Sans', sans-serif;right:1174.00px;transform-origin:100% 50%;transform:scaleX(0.9502);">$29,400</div>
<svg style="position:absolute;left:755.00px;top:922.60px;" width="4" height="4" viewBox="0 0 4 4"><circle cx="2" cy="2" r="1.65" fill="#555555"/></svg>
<svg style="position:absolute;left:755.00px;top:927.40px;" width="4" height="4" viewBox="0 0 4 4"><circle cx="2" cy="2" r="1.65" fill="#555555"/></svg>
<svg style="position:absolute;left:755.00px;top:932.20px;" width="4" height="4" viewBox="0 0 4 4"><circle cx="2" cy="2" r="1.65" fill="#555555"/></svg>
<div style="position:absolute;left:295.00px;top:953.00px;width:482.00px;height:1.00px;background:#e3e3e3;"></div>
<div style="position:absolute;left:315.00px;top:1295.00px;width:442.00px;height:43.50px;background:transparent;border:1.3px solid #2c5f9f;border-radius:4px;box-sizing:border-box;"></div>
<svg style="position:absolute;left:458.00px;top:1310.00px;" width="12" height="12" viewBox="0 0 12 12"><path d="M6 0 L6 12 M0 6 L12 6" stroke="#2c5f9f" stroke-width="2"/></svg>
<div id="t5cd231a81" style="position:absolute;top:1308.91px;font-size:14.60px;line-height:14.60px;font-weight:400;color:#2c5f9f;white-space:nowrap;font-family:'Liberation Sans', sans-serif;letter-spacing:1.30px;left:475.34px;transform-origin:0 50%;transform:scaleX(0.9006);-webkit-text-stroke:0.35px #2c5f9f;">ADD CASH INFLOW</div>
<div id="t8e7385681" style="position:absolute;top:763.30px;font-size:25.30px;line-height:25.30px;font-weight:400;color:#1b1b1b;white-space:nowrap;font-family:'Liberation Sans', sans-serif;left:812.06px;transform-origin:0 50%;transform:scaleX(0.9736);">Account Balances</div>
<div style="position:absolute;left:793.00px;top:808.00px;width:481.00px;height:1.00px;background:#e3e3e3;"></div>
<div id="t860ab7b61" style="position:absolute;top:822.81px;font-size:18.50px;line-height:18.50px;font-weight:400;color:#1e1e1e;white-space:nowrap;font-family:'Liberation Sans', sans-serif;left:812.37px;transform-origin:0 50%;transform:scaleX(0.9860);">Taxable</div>
<div id="teb9adb991" style="position:absolute;top:824.91px;font-size:14.60px;line-height:14.60px;font-weight:400;color:#adadad;white-space:nowrap;font-family:'Liberation Sans', sans-serif;right:676.50px;transform-origin:100% 50%;transform:scaleX(0.9734);">Manual</div>
<svg style="position:absolute;left:1253.10px;top:823.10px;" width="4" height="4" viewBox="0 0 4 4"><circle cx="2" cy="2" r="1.65" fill="#555555"/></svg>
<svg style="position:absolute;left:1253.10px;top:827.90px;" width="4" height="4" viewBox="0 0 4 4"><circle cx="2" cy="2" r="1.65" fill="#555555"/></svg>
<svg style="position:absolute;left:1253.10px;top:832.70px;" width="4" height="4" viewBox="0 0 4 4"><circle cx="2" cy="2" r="1.65" fill="#555555"/></svg>
<div id="t864d49a11" style="position:absolute;top:858.81px;font-size:13.60px;line-height:13.60px;font-weight:700;color:#111111;white-space:nowrap;font-family:'Liberation Sans', sans-serif;left:812.59px;transform-origin:0 50%;transform:scaleX(0.9734);">Balance</div>
<div id="t540b46211" style="position:absolute;top:856.91px;font-size:16.60px;line-height:16.60px;font-weight:400;color:#1e1e1e;white-space:nowrap;font-family:'Liberation Sans', sans-serif;right:676.30px;transform-origin:100% 50%;transform:scaleX(0.9376);">$600,000</div>
<div style="position:absolute;left:793.00px;top:887.00px;width:481.00px;height:1.00px;background:#e3e3e3;"></div>
<div id="t0a94a4e01" style="position:absolute;top:901.41px;font-size:18.50px;line-height:18.50px;font-weight:400;color:#1e1e1e;white-space:nowrap;font-family:'Liberation Sans', sans-serif;left:812.37px;transform-origin:0 50%;transform:scaleX(0.9569);">Jasper IRA</div>
<div id="teb9adb992" style="position:absolute;top:903.51px;font-size:14.60px;line-height:14.60px;font-weight:400;color:#adadad;white-space:nowrap;font-family:'Liberation Sans', sans-serif;right:676.50px;transform-origin:100% 50%;transform:scaleX(0.9734);">Manual</div>
<svg style="position:absolute;left:1253.10px;top:901.70px;" width="4" height="4" viewBox="0 0 4 4"><circle cx="2" cy="2" r="1.65" fill="#555555"/></svg>
<svg style="position:absolute;left:1253.10px;top:906.50px;" width="4" height="4" viewBox="0 0 4 4"><circle cx="2" cy="2" r="1.65" fill="#555555"/></svg>
<svg style="position:absolute;left:1253.10px;top:911.30px;" width="4" height="4" viewBox="0 0 4 4"><circle cx="2" cy="2" r="1.65" fill="#555555"/></svg>
<div id="t864d49a12" style="position:absolute;top:937.40px;font-size:13.60px;line-height:13.60px;font-weight:700;color:#111111;white-space:nowrap;font-family:'Liberation Sans', sans-serif;left:812.59px;transform-origin:0 50%;transform:scaleX(0.9734);">Balance</div>
<div id="t32ed89fd1" style="position:absolute;top:935.50px;font-size:16.60px;line-height:16.60px;font-weight:400;color:#1e1e1e;white-space:nowrap;font-family:'Liberation Sans', sans-serif;right:676.30px;transform-origin:100% 50%;transform:scaleX(0.9376);">$621,600</div>
<div style="position:absolute;left:793.00px;top:965.30px;width:481.00px;height:1.00px;background:#e3e3e3;"></div>
<div id="t449c45c41" style="position:absolute;top:980.01px;font-size:18.50px;line-height:18.50px;font-weight:400;color:#1e1e1e;white-space:nowrap;font-family:'Liberation Sans', sans-serif;left:812.37px;transform-origin:0 50%;transform:scaleX(0.9439);">Mary IRA</div>
<div id="teb9adb993" style="position:absolute;top:982.11px;font-size:14.60px;line-height:14.60px;font-weight:400;color:#adadad;white-space:nowrap;font-family:'Liberation Sans', sans-serif;right:676.50px;transform-origin:100% 50%;transform:scaleX(0.9734);">Manual</div>
<svg style="position:absolute;left:1253.10px;top:980.30px;" width="4" height="4" viewBox="0 0 4 4"><circle cx="2" cy="2" r="1.65" fill="#555555"/></svg>
<svg style="position:absolute;left:1253.10px;top:985.10px;" width="4" height="4" viewBox="0 0 4 4"><circle cx="2" cy="2" r="1.65" fill="#555555"/></svg>
<svg style="position:absolute;left:1253.10px;top:989.90px;" width="4" height="4" viewBox="0 0 4 4"><circle cx="2" cy="2" r="1.65" fill="#555555"/></svg>
<div id="t864d49a13" style="position:absolute;top:1016.01px;font-size:13.60px;line-height:13.60px;font-weight:700;color:#111111;white-space:nowrap;font-family:'Liberation Sans', sans-serif;left:812.59px;transform-origin:0 50%;transform:scaleX(0.9734);">Balance</div>
<div id="t6fe483161" style="position:absolute;top:1014.11px;font-size:16.60px;line-height:16.60px;font-weight:400;color:#1e1e1e;white-space:nowrap;font-family:'Liberation Sans', sans-serif;right:676.30px;transform-origin:100% 50%;transform:scaleX(0.9347);">$255,000</div>
<div style="position:absolute;left:793.00px;top:1044.00px;width:481.00px;height:1.00px;background:#e3e3e3;"></div>
<div id="teaf64a3d1" style="position:absolute;top:1058.60px;font-size:18.50px;line-height:18.50px;font-weight:400;color:#1e1e1e;white-space:nowrap;font-family:'Liberation Sans', sans-serif;left:812.37px;transform-origin:0 50%;transform:scaleX(0.9618);">Mary's Roth</div>
<div id="teb9adb994" style="position:absolute;top:1060.71px;font-size:14.60px;line-height:14.60px;font-weight:400;color:#adadad;white-space:nowrap;font-family:'Liberation Sans', sans-serif;right:676.50px;transform-origin:100% 50%;transform:scaleX(0.9734);">Manual</div>
<svg style="position:absolute;left:1253.10px;top:1058.90px;" width="4" height="4" viewBox="0 0 4 4"><circle cx="2" cy="2" r="1.65" fill="#555555"/></svg>
<svg style="position:absolute;left:1253.10px;top:1063.70px;" width="4" height="4" viewBox="0 0 4 4"><circle cx="2" cy="2" r="1.65" fill="#555555"/></svg>
<svg style="position:absolute;left:1253.10px;top:1068.50px;" width="4" height="4" viewBox="0 0 4 4"><circle cx="2" cy="2" r="1.65" fill="#555555"/></svg>
<div id="t864d49a14" style="position:absolute;top:1094.60px;font-size:13.60px;line-height:13.60px;font-weight:700;color:#111111;white-space:nowrap;font-family:'Liberation Sans', sans-serif;left:812.59px;transform-origin:0 50%;transform:scaleX(0.9734);">Balance</div>
<div id="taa8053bc1" style="position:absolute;top:1092.72px;font-size:16.60px;line-height:16.60px;font-weight:400;color:#1e1e1e;white-space:nowrap;font-family:'Liberation Sans', sans-serif;right:676.30px;transform-origin:100% 50%;transform:scaleX(0.9302);">$15,000</div>
<div style="position:absolute;left:793.00px;top:1122.30px;width:481.00px;height:1.00px;background:#e3e3e3;"></div>
<div id="tce1960611" style="position:absolute;top:1137.21px;font-size:18.50px;line-height:18.50px;font-weight:400;color:#1e1e1e;white-space:nowrap;font-family:'Liberation Sans', sans-serif;left:812.37px;transform-origin:0 50%;transform:scaleX(0.9648);">Jasper's Roth</div>
<div id="teb9adb995" style="position:absolute;top:1139.30px;font-size:14.60px;line-height:14.60px;font-weight:400;color:#adadad;white-space:nowrap;font-family:'Liberation Sans', sans-serif;right:676.50px;transform-origin:100% 50%;transform:scaleX(0.9734);">Manual</div>
<svg style="position:absolute;left:1253.10px;top:1137.50px;" width="4" height="4" viewBox="0 0 4 4"><circle cx="2" cy="2" r="1.65" fill="#555555"/></svg>
<svg style="position:absolute;left:1253.10px;top:1142.30px;" width="4" height="4" viewBox="0 0 4 4"><circle cx="2" cy="2" r="1.65" fill="#555555"/></svg>
<svg style="position:absolute;left:1253.10px;top:1147.10px;" width="4" height="4" viewBox="0 0 4 4"><circle cx="2" cy="2" r="1.65" fill="#555555"/></svg>
<div id="t864d49a15" style="position:absolute;top:1173.21px;font-size:13.60px;line-height:13.60px;font-weight:700;color:#111111;white-space:nowrap;font-family:'Liberation Sans', sans-serif;left:812.59px;transform-origin:0 50%;transform:scaleX(0.9734);">Balance</div>
<div id="t75766f311" style="position:absolute;top:1171.31px;font-size:16.60px;line-height:16.60px;font-weight:400;color:#1e1e1e;white-space:nowrap;font-family:'Liberation Sans', sans-serif;right:676.30px;transform-origin:100% 50%;transform:scaleX(0.9302);">$10,000</div>
<div style="position:absolute;left:793.00px;top:1201.00px;width:481.00px;height:1.00px;background:#e3e3e3;"></div>
<div id="tf26986391" style="position:absolute;top:1215.82px;font-size:18.50px;line-height:18.50px;font-weight:400;color:#1e1e1e;white-space:nowrap;font-family:'Liberation Sans', sans-serif;left:812.37px;transform-origin:0 50%;transform:scaleX(0.9600);">Jasper HSA</div>
<div id="teb9adb996" style="position:absolute;top:1217.91px;font-size:14.60px;line-height:14.60px;font-weight:400;color:#adadad;white-space:nowrap;font-family:'Liberation Sans', sans-serif;right:676.50px;transform-origin:100% 50%;transform:scaleX(0.9734);">Manual</div>
<svg style="position:absolute;left:1253.10px;top:1216.10px;" width="4" height="4" viewBox="0 0 4 4"><circle cx="2" cy="2" r="1.65" fill="#555555"/></svg>
<svg style="position:absolute;left:1253.10px;top:1220.90px;" width="4" height="4" viewBox="0 0 4 4"><circle cx="2" cy="2" r="1.65" fill="#555555"/></svg>
<svg style="position:absolute;left:1253.10px;top:1225.70px;" width="4" height="4" viewBox="0 0 4 4"><circle cx="2" cy="2" r="1.65" fill="#555555"/></svg>
<div id="t864d49a16" style="position:absolute;top:1251.81px;font-size:13.60px;line-height:13.60px;font-weight:700;color:#111111;white-space:nowrap;font-family:'Liberation Sans', sans-serif;left:812.59px;transform-origin:0 50%;transform:scaleX(0.9734);">Balance</div>
<div id="t91e36bc31" style="position:absolute;top:1249.91px;font-size:16.60px;line-height:16.60px;font-weight:400;color:#1e1e1e;white-space:nowrap;font-family:'Liberation Sans', sans-serif;right:676.30px;transform-origin:100% 50%;transform:scaleX(0.9347);">$147,420</div>
<div style="position:absolute;left:813.00px;top:1295.00px;width:441.00px;height:43.50px;background:transparent;border:1.3px solid #2c5f9f;border-radius:4px;box-sizing:border-box;"></div>
<svg style="position:absolute;left:970.30px;top:1310.00px;" width="12" height="12" viewBox="0 0 12 12"><path d="M6 0 L6 12 M0 6 L12 6" stroke="#2c5f9f" stroke-width="2"/></svg>
<div id="taddbb2791" style="position:absolute;top:1308.91px;font-size:14.60px;line-height:14.60px;font-weight:400;color:#2c5f9f;white-space:nowrap;font-family:'Liberation Sans', sans-serif;letter-spacing:1.30px;left:988.14px;transform-origin:0 50%;transform:scaleX(0.9096);-webkit-text-stroke:0.35px #2c5f9f;">ADD ACCOUNT</div>
<div id="t397863891" style="position:absolute;top:762.71px;font-size:25.30px;line-height:25.30px;font-weight:400;color:#1b1b1b;white-space:nowrap;font-family:'Liberation Sans', sans-serif;left:1308.86px;transform-origin:0 50%;transform:scaleX(0.9881);">Distribution History</div>
<div style="position:absolute;left:1532.00px;top:756.30px;width:40.70px;height:40.30px;background:#067cb3;"></div>
<div id="t964add4b1" style="position:absolute;top:764.05px;font-size:25.00px;line-height:25.00px;font-weight:700;color:#ffffff;white-space:nowrap;font-family:'Liberation Sans', sans-serif;left:1552.35px;transform-origin:0 50%;transform:translateX(-50%) scaleX(1.0000);transform-origin:50% 50%;">3</div>
<div id="t4d4f577c1" style="position:absolute;top:807.71px;font-size:14.00px;line-height:14.00px;font-weight:700;color:#111111;white-space:nowrap;font-family:'Liberation Sans', sans-serif;left:1332.60px;transform-origin:0 50%;transform:translateX(-50%) scaleX(1.0271);transform-origin:50% 50%;">2025</div>
<div style="position:absolute;left:1310.00px;top:830.00px;width:45.00px;height:2.20px;background:#1e5fae;"></div>
<svg style="position:absolute;left:1311.00px;top:857.00px;" width="22" height="22" viewBox="0 0 22 22"><circle cx="11" cy="11" r="10.6" fill="#1c62b9"/></svg>
<div id="tc58817a11" style="position:absolute;top:863.00px;font-size:10.80px;line-height:10.80px;font-weight:700;color:#ffffff;white-space:nowrap;font-family:'Liberation Sans', sans-serif;left:1322.00px;transform-origin:0 50%;transform:translateX(-50%) scaleX(0.9024);transform-origin:50% 50%;">Q1</div>
<div id="t7ed5a9591" style="position:absolute;top:858.91px;font-size:16.60px;line-height:16.60px;font-weight:400;color:#222222;white-space:nowrap;font-family:'Liberation Sans', sans-serif;left:1345.25px;transform-origin:0 50%;transform:scaleX(0.9878);">Planned Distribution</div>
<div id="t9c8f5f581" style="position:absolute;top:883.01px;font-size:14.00px;line-height:14.00px;font-weight:400;color:#777777;white-space:nowrap;font-family:'Liberation Sans', sans-serif;left:1345.37px;transform-origin:0 50%;transform:scaleX(1.0196);">$30,980 (Mar 03, 2025)</div>
<div id="t8a36a9dd1" style="position:absolute;top:885.00px;font-size:12.60px;line-height:12.60px;font-weight:400;color:#2a68b8;white-space:nowrap;font-family:'Liberation Sans', sans-serif;left:1498.23px;transform-origin:0 50%;transform:scaleX(0.9662);">Summary</div>
<svg style="position:absolute;left:1557.50px;top:881.50px;" width="15" height="15" viewBox="0 0 15 15"><path d="M1 2 L1 14 L13 14 L13 8.5 M7 1 L14 1 L14 8 M14 1 L6.5 8.5" fill="none" stroke="#2a68b8" stroke-width="1.9"/><path d="M1 1.5 L6 1.5" stroke="#2a68b8" stroke-width="1.9"/></svg>
<svg style="position:absolute;left:1741.00px;top:870.00px;" width="12" height="12" viewBox="0 0 12 12"><path d="M4 1.6 L8.6 6 L4 10.4" fill="none" stroke="#888888" stroke-width="1.8"/></svg>
<div style="position:absolute;left:1345.00px;top:911.00px;width:426.00px;height:1.00px;background:#e3e3e3;"></div>
<div style="position:absolute;left:1321.90px;top:889.50px;width:1.20px;height:29.10px;background:#7a7a7a;"></div>
<div style="position:absolute;left:1321.90px;top:960.20px;width:1.20px;height:29.50px;background:#7a7a7a;"></div>
<div style="position:absolute;left:1321.90px;top:1031.20px;width:1.20px;height:29.80px;background:#7a7a7a;"></div>
<svg style="position:absolute;left:1310.00px;top:927.00px;" width="24" height="24" viewBox="0 0 24 24"><circle cx="12" cy="12" r="11" fill="none" stroke="#2f68b4" stroke-width="1.15"/></svg>
<div id="t7532e4461" style="position:absolute;top:934.00px;font-size:10.80px;line-height:10.80px;font-weight:400;color:#2a62ad;white-space:nowrap;font-family:'Liberation Sans', sans-serif;left:1322.00px;transform-origin:0 50%;transform:translateX(-50%) scaleX(0.9024);transform-origin:50% 50%;">Q2</div>
<svg style="position:absolute;left:1310.00px;top:998.00px;" width="24" height="24" viewBox="0 0 24 24"><circle cx="12" cy="12" r="11" fill="none" stroke="#2f68b4" stroke-width="1.15"/></svg>
<div id="tfd84fc4c1" style="position:absolute;top:1005.00px;font-size:10.80px;line-height:10.80px;font-weight:400;color:#2a62ad;white-space:nowrap;font-family:'Liberation Sans', sans-serif;left:1322.00px;transform-origin:0 50%;transform:translateX(-50%) scaleX(0.9024);transform-origin:50% 50%;">Q3</div>
<svg style="position:absolute;left:1310.00px;top:1069.00px;" width="24" height="24" viewBox="0 0 24 24"><circle cx="12" cy="12" r="11" fill="none" stroke="#2f68b4" stroke-width="1.15"/></svg>
<div id="t1b1de7251" style="position:absolute;top:1076.00px;font-size:10.80px;line-height:10.80px;font-weight:400;color:#2a62ad;white-space:nowrap;font-family:'Liberation Sans', sans-serif;left:1322.00px;transform-origin:0 50%;transform:translateX(-50%) scaleX(0.9024);transform-origin:50% 50%;">Q4</div>
<div style="position:absolute;left:1310.20px;top:1295.30px;width:440.00px;height:43.30px;background:#f2f4f7;border-radius:8px;"></div>
<svg style="position:absolute;left:1327.50px;top:1306.80px;" width="21" height="21" viewBox="0 0 21 21"><circle cx="10.5" cy="10.5" r="10.2" fill="#1c62b9"/><rect x="9.3" y="5" width="2.4" height="7.6" rx="1" fill="#fff"/><circle cx="10.5" cy="15.5" r="1.4" fill="#fff"/></svg>
<div id="t9cda39fc1" style="position:absolute;top:1309.02px;font-size:14.60px;line-height:14.60px;font-weight:400;color:#1f4e74;white-space:nowrap;font-family:'Liberation Sans', sans-serif;left:1356.94px;transform-origin:0 50%;transform:scaleX(0.9823);">View important disclosures</div>
</body></html>
